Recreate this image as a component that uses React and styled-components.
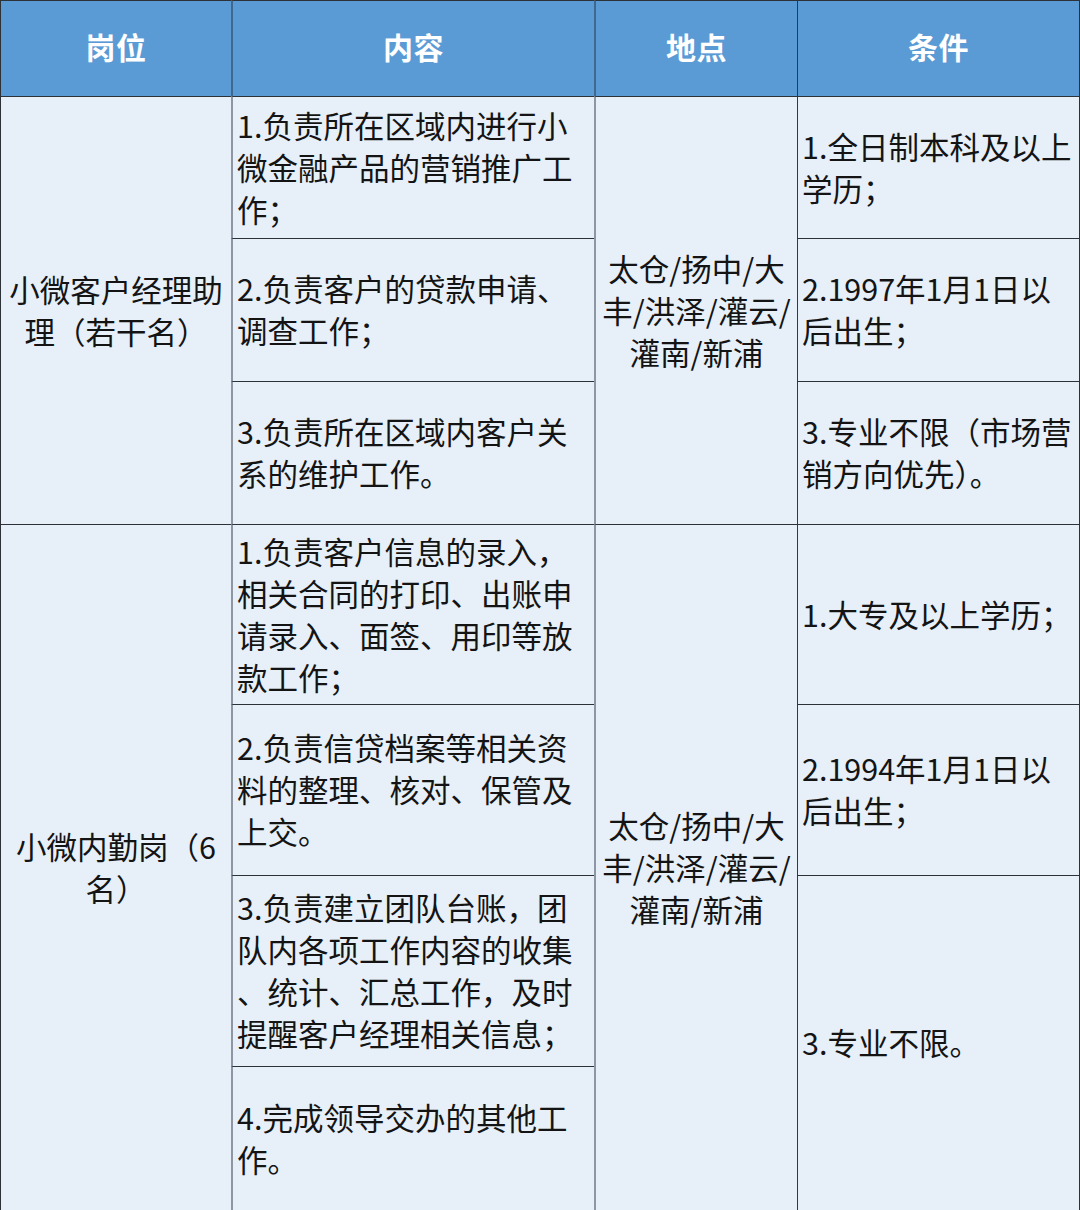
import React from "react";
import styled, { createGlobalStyle } from "styled-components";

const Global = createGlobalStyle`
  html, body { margin: 0; padding: 0; background: #fff; }
  body { font-family: "Noto Sans CJK SC", "Noto Sans", sans-serif; }
`;

const Table = styled.div`
  display: grid;
  width: 1080px;
  height: 1210px;
  grid-template-columns: 230px 363px 203px 282px;
  grid-template-rows: 96px 142px 143px 143px 180px 171px 191px 144px;
  box-sizing: border-box;
  border-right: 1px solid #2c3238;
  border-bottom: 1px solid #2c3238;
  border-left: 1px solid #2c3238;
`;

const lineFor = (col) =>
  col === 4
    ? "1px solid #33393f"
    : col === 1
    ? "none"
    : "2px solid rgba(30, 40, 55, 0.45)";

const Head = styled.div`
  grid-column: ${(p) => p.$col};
  grid-row: 1;
  box-sizing: border-box;
  background: #5b9bd5;
  color: #fff;
  font-weight: 700;
  font-size: 30px;
  display: flex;
  align-items: center;
  justify-content: center;
  padding-bottom: 5px;
  border-top: 1px solid #2c3238;
  border-left: ${(p) => lineFor(p.$col)};
  letter-spacing: 0.5px;
`;

const Cell = styled.div`
  grid-column: ${(p) => p.$col};
  grid-row: ${(p) => p.$row};
  box-sizing: border-box;
  background: #e7f0f9;
  color: #141414;
  font-size: 30.5px;
  line-height: 42px;
  display: flex;
  flex-direction: column;
  justify-content: center;
  align-items: ${(p) => (p.$center ? "center" : "flex-start")};
  text-align: ${(p) => (p.$center ? "center" : "left")};
  padding: ${(p) => (p.$center ? "0 0 2px" : "0 0 2px 4px")};
  border-top: 1px solid #2c3238;
  border-left: ${(p) => lineFor(p.$col)};
  white-space: nowrap;
  overflow: hidden;
`;

const Line = styled.span`
  display: block;
`;

const Lines = ({ lines }) => lines.map((l, i) => <Line key={i}>{l}</Line>);

const loc = ["太仓/扬中/大", "丰/洪泽/灌云/", "灌南/新浦"];

export default function App() {
  return (
    <>
      <Global />
      <Table>
        <Head $col={1}>岗位</Head>
        <Head $col={2}>内容</Head>
        <Head $col={3}>地点</Head>
        <Head $col={4}>条件</Head>

        <Cell $col={1} $row="2 / 5" $center>
          <Lines lines={["小微客户经理助", "理（若干名）"]} />
        </Cell>
        <Cell $col={2} $row={2}>
          <Lines lines={["1.负责所在区域内进行小", "微金融产品的营销推广工", "作；"]} />
        </Cell>
        <Cell $col={2} $row={3}>
          <Lines lines={["2.负责客户的贷款申请、", "调查工作；"]} />
        </Cell>
        <Cell $col={2} $row={4}>
          <Lines lines={["3.负责所在区域内客户关", "系的维护工作。"]} />
        </Cell>
        <Cell $col={3} $row="2 / 5" $center>
          <Lines lines={loc} />
        </Cell>
        <Cell $col={4} $row={2}>
          <Lines lines={["1.全日制本科及以上", "学历；"]} />
        </Cell>
        <Cell $col={4} $row={3}>
          <Lines lines={["2.1997年1月1日以", "后出生；"]} />
        </Cell>
        <Cell $col={4} $row={4}>
          <Lines lines={["3.专业不限（市场营", "销方向优先）。"]} />
        </Cell>

        <Cell $col={1} $row="5 / 9" $center>
          <Lines lines={["小微内勤岗（6", "名）"]} />
        </Cell>
        <Cell $col={2} $row={5}>
          <Lines
            lines={["1.负责客户信息的录入，", "相关合同的打印、出账申", "请录入、面签、用印等放", "款工作；"]}
          />
        </Cell>
        <Cell $col={2} $row={6}>
          <Lines lines={["2.负责信贷档案等相关资", "料的整理、核对、保管及", "上交。"]} />
        </Cell>
        <Cell $col={2} $row={7}>
          <Lines
            lines={["3.负责建立团队台账，团", "队内各项工作内容的收集", "、统计、汇总工作，及时", "提醒客户经理相关信息；"]}
          />
        </Cell>
        <Cell $col={2} $row={8}>
          <Lines lines={["4.完成领导交办的其他工", "作。"]} />
        </Cell>
        <Cell $col={3} $row="5 / 9" $center>
          <Lines lines={loc} />
        </Cell>
        <Cell $col={4} $row={5}>
          <Lines lines={["1.大专及以上学历；"]} />
        </Cell>
        <Cell $col={4} $row={6}>
          <Lines lines={["2.1994年1月1日以", "后出生；"]} />
        </Cell>
        <Cell $col={4} $row="7 / 9">
          <Lines lines={["3.专业不限。"]} />
        </Cell>
      </Table>
    </>
  );
}
